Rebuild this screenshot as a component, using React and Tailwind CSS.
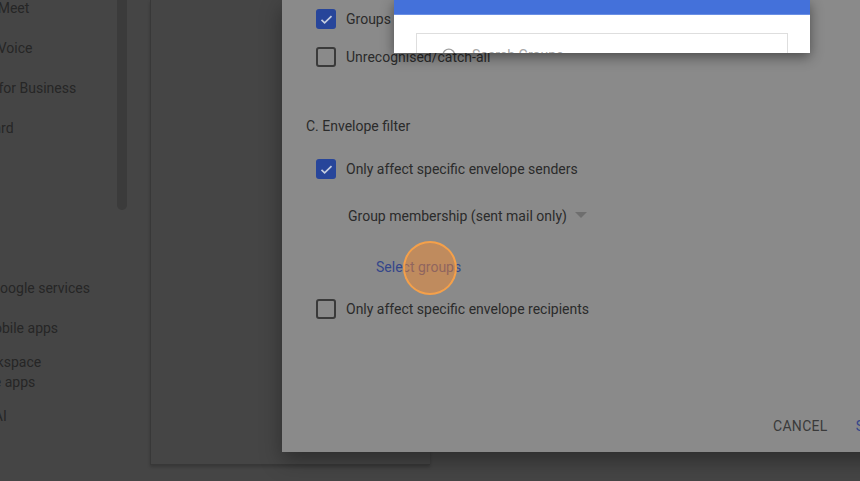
import { Search } from 'lucide-react'

const topItems = ['Google Meet', 'Google Voice', 'Groups for Business', 'Jamboard']

function Check({ checked }) {
	if (checked) {
		return (
			<div className="w-5 h-5 rounded-[3px] bg-[#27459a] flex items-center justify-center shrink-0">
				<svg width="15" height="15" viewBox="0 0 24 24" fill="none" stroke="#c5cde0" strokeWidth="2.6">
					<path d="M4 12.5l5 5L20 6.5" />
				</svg>
			</div>
		)
	}
	return <div className="w-5 h-5 rounded-[3px] border-2 border-[#3a3a3a] shrink-0" />
}

function Row({ checked, children, className = '' }) {
	return (
		<div className={'flex items-center h-5 pl-[34px] gap-[10px] ' + className}>
			<Check checked={checked} />
			<span>{children}</span>
		</div>
	)
}

export default function App() {
	return (
		<div
			className="relative w-[860px] h-[481px] overflow-hidden bg-[#454545] flex text-[14px]"
			style={{ fontFamily: 'Roboto, "Liberation Sans", sans-serif' }}
		>
			{/* sidebar */}
			<div className="w-[150px] shrink-0 flex">
				<div className="w-[117px] overflow-hidden text-[#262626]">
					<div className="-mt-3">
						{topItems.map(t => (
							<div key={t} className="h-10 flex items-center ml-[-50px] whitespace-nowrap">{t}</div>
						))}
					</div>
					<div className="mt-[120px] ml-[-76px] w-[172px]">
						<div className="h-10 flex items-center whitespace-nowrap">Additional Google services</div>
						<div className="h-10 flex items-center whitespace-nowrap">Web and mobile apps</div>
						<div className="h-12 flex items-center leading-5">Google Workspace Marketplace apps</div>
						<div className="h-10 flex items-center whitespace-nowrap">Generative AI</div>
					</div>
				</div>
				<div className="w-[10px] h-[210px] rounded-b-full bg-[#3b3b3b]" />
			</div>

			{/* panel behind dialog */}
			<div className="w-[280px] h-[465px] border-l border-b border-[#383838] shadow-[0_2px_3px_rgba(0,0,0,0.2)]" />

			{/* dialog */}
			<div className="absolute left-[282px] top-0 w-[620px] h-[452px] bg-[#8a8a8a] text-[#2b2b2b] flex flex-col shadow-[0_8px_20px_rgba(0,0,0,0.35)]">
				<Row checked className="mt-[9px]">Groups</Row>
				<Row className="mt-[18px]">Unrecognised/catch-all</Row>

				<div className="mt-[49px] pl-[24px] leading-5">C. Envelope filter</div>

				<Row checked className="mt-[23px]">Only affect specific envelope senders</Row>

				<div className="mt-[27px] pl-[66px] h-5 flex items-center gap-[8px]">
					<span>Group membership (sent mail only)</span>
					<svg width="12" height="6" viewBox="0 0 12 6" className="mb-[2px]">
						<path d="M0 0h12L6 6z" fill="#6e6e6e" />
					</svg>
				</div>

				<div className="mt-[31px] pl-[94px] h-5 leading-5 text-[#34468a]">Select groups</div>

				<Row className="mt-[22px]">Only affect specific envelope recipients</Row>

				<div className="mt-auto h-[52px] flex items-center pl-[491px] gap-[28px] tracking-[0.3px]">
					<span className="text-[#3a3a3a]">CANCEL</span>
					<span className="text-[#34468a]">SAVE</span>
				</div>
			</div>

			{/* click indicator */}
			<div className="absolute left-[403px] top-[241px] w-[54px] h-[54px] rounded-full bg-[rgba(255,140,40,0.45)] border-2 border-[rgba(255,165,70,0.85)]" />

			{/* groups popup */}
			<div className="absolute left-[394px] top-0 w-[416px] h-[53px] bg-white overflow-hidden shadow-[0_4px_12px_rgba(0,0,0,0.45)]">
				<div className="h-[15px] bg-[#4471da] border-b border-[#6a8fe4]" />
				<div className="px-[22px] pt-[18px]">
					<div className="h-[44px] border border-[#dedede] flex items-center pl-[24px] gap-[14px] text-[#a8a8a8]">
						<Search size={17} strokeWidth={2} className="text-[#9e9e9e]" />
						<span>Search Groups</span>
					</div>
				</div>
			</div>
		</div>
	)
}
